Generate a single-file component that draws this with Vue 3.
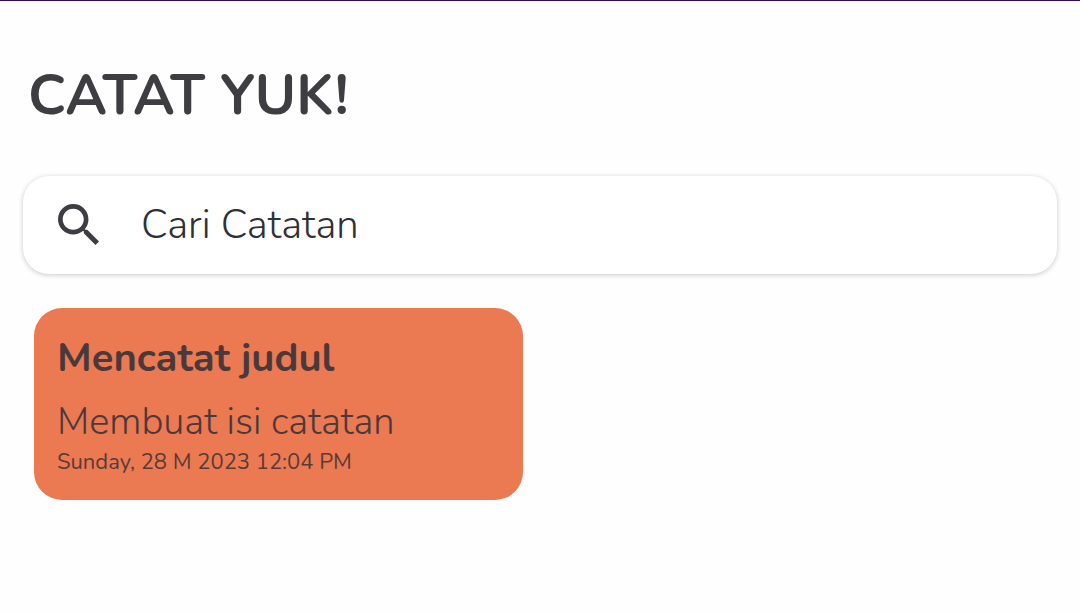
<script setup>
import { ref } from 'vue'

const query = ref('')
const notes = [
  { title: 'Mencatat judul', body: 'Membuat isi catatan', date: 'Sunday, 28 M 2023 12:04 PM' },
]
</script>

<template>
  <main class="page">
    <h1 class="heading">CATAT YUK!</h1>
    <label class="search">
      <svg class="icon" viewBox="3 3 17.5 17.5" aria-hidden="true">
        <path d="M15.5 14h-.79l-.28-.27A6.47 6.47 0 0 0 16 9.5 6.5 6.5 0 1 0 9.5 16c1.61 0 3.09-.59 4.23-1.57l.27.28v.79l5 4.99L20.49 19l-4.99-5zm-6 0C7.01 14 5 11.99 5 9.5S7.01 5 9.5 5 14 7.01 14 9.5 11.99 14 9.5 14z" />
      </svg>
      <input v-model="query" type="text" placeholder="Cari Catatan" aria-label="Cari Catatan" />
    </label>
    <section class="notes">
      <article v-for="note in notes" :key="note.title" class="note">
        <h2>{{ note.title }}</h2>
        <p class="body">{{ note.body }}</p>
        <time>{{ note.date }}</time>
      </article>
    </section>
  </main>
</template>

<style>
body {
  margin: 0;
  background: #fefefe;
}
</style>

<style scoped>
.page {
  box-sizing: border-box;
  min-height: 100vh;
  padding: 61px 23px 24px;
  border-top: 1px solid #35094f;
  color: #3d3d42;
  font-family: Nunito, "Open Sans", "Noto Sans", sans-serif;
}
.heading {
  margin: 0 5px;
  font-size: 56px;
  line-height: 68px;
  font-weight: 700;
}
.search {
  display: flex;
  align-items: center;
  gap: 42px;
  box-sizing: border-box;
  height: 98px;
  margin-top: 46px;
  padding: 0 35px;
  border-radius: 26px;
  background: #fff;
  box-shadow: 0 1px 5px rgba(0, 0, 0, 0.22);
}
.icon {
  flex: none;
  width: 41px;
  height: 41px;
  margin-bottom: 2px;
  fill: #3d3d42;
}
input {
  flex: 1;
  min-width: 0;
  padding: 0;
  border: 0;
  outline: 0;
  background: transparent;
  color: inherit;
  font: 300 40px/54px Nunito, "Open Sans", sans-serif;
}
input::placeholder {
  color: #303036;
  opacity: 1;
}
.notes {
  display: grid;
  grid-template-columns: 1fr 1fr;
  gap: 34px;
  margin: 34px 11px 0;
}
.note {
  padding: 24px 23px;
  border-radius: 28px;
  background: #eb7a52;
  color: #4a393c;
}
h2 {
  margin: 0;
  font-size: 40px;
  line-height: 52px;
  font-weight: 700;
}
.body {
  margin: 12px 0 0;
  font-size: 38px;
  line-height: 52px;
  font-weight: 300;
}
time {
  display: block;
  color: #5a3a36;
  font-size: 22px;
  line-height: 28px;
}
</style>
